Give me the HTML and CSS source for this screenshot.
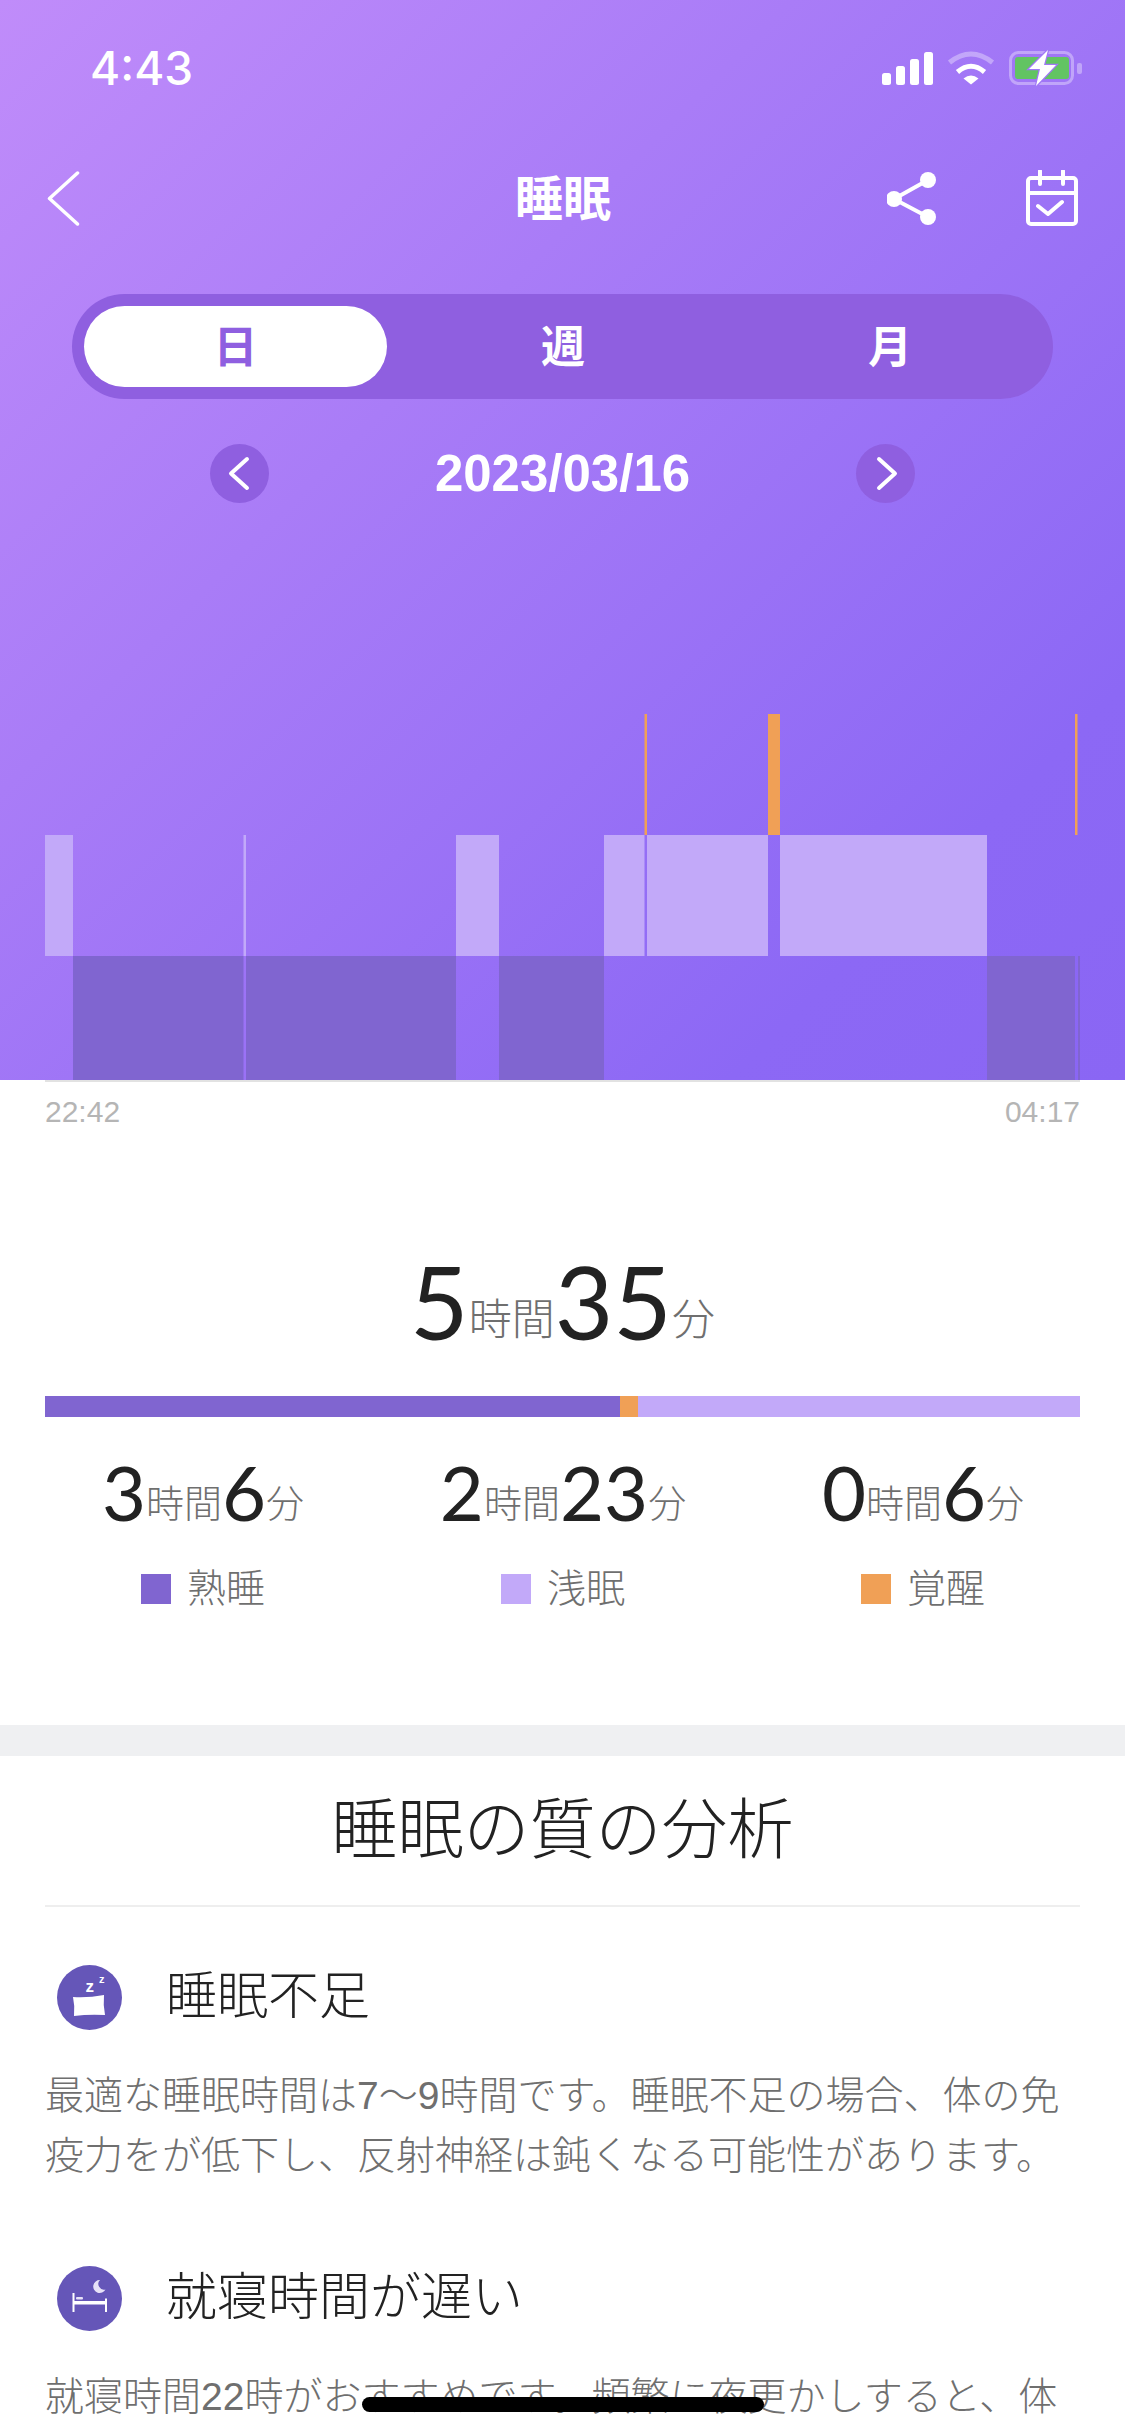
FILE: index.html
```html
<!DOCTYPE html>
<html lang="ja">
<head>
    <title>睡眠</title>
    <meta charset="utf-8">
    <link rel="stylesheet" href="styles.css">
</head>
<body>
    <div class="screen">
        <div class="hero">
            <div class="status">
                <span class="time">4:43</span>
                <div class="status-icons">
                    <svg class="signal" width="51" height="33" viewBox="0 0 51 33">
                        <rect x="0" y="21" width="9" height="12" rx="2.5"/>
                        <rect x="14" y="14" width="9" height="19" rx="2.5"/>
                        <rect x="28" y="7" width="9" height="26" rx="2.5"/>
                        <rect x="42" y="0" width="9" height="33" rx="2.5"/>
                    </svg>
                    <svg class="wifi" width="46" height="34" viewBox="0 0 46 34">
                        <path class="wifi-dim" d="M1.5 11.5Q23 -5.5 44.5 11.5"/>
                        <path class="wifi-on" d="M9.5 21Q23 9.5 36.5 21"/>
                        <path class="wifi-dot" d="M15.5 27.5Q23 21.5 30.5 27.5L23 33.5Z"/>
                    </svg>
                    <svg class="battery" width="73" height="34" viewBox="0 0 73 34">
                        <rect class="batt-shell" x="1.5" y="1.5" width="62" height="31" rx="8"/>
                        <rect class="batt-nub" x="68" y="12" width="5" height="11" rx="2"/>
                        <rect class="batt-fill" x="6" y="6" width="54" height="22" rx="3"/>
                        <path class="batt-bolt" d="M39 -1L20 18H31L27 35L47 14H35Z"/>
                    </svg>
                </div>
            </div>

            <div class="nav">
                <svg class="line-icon back" width="34" height="55" viewBox="0 0 34 55">
                    <path d="M30.5 2L2.5 27.5L30.5 53"/>
                </svg>
                <div class="nav-title">睡眠</div>
                <div class="nav-actions">
                    <svg class="line-icon" width="50" height="54" viewBox="0 0 50 54">
                        <path d="M41 9L7 28L41 46"/>
                        <circle class="solid" cx="41" cy="9" r="8"/>
                        <circle class="solid" cx="7" cy="28" r="8"/>
                        <circle class="solid" cx="41" cy="46" r="8"/>
                    </svg>
                    <svg class="line-icon" width="54" height="56" viewBox="0 0 54 56">
                        <rect x="3" y="8" width="48" height="46" rx="3"/>
                        <path d="M3 23H51M15 1V14M38 1V14M13 36L23 44L37 32"/>
                    </svg>
                </div>
            </div>

            <div class="tabs">
                <div class="tab active">日</div>
                <div class="tab">週</div>
                <div class="tab">月</div>
            </div>

            <div class="date-row">
                <div class="date-btn">
                    <svg class="line-icon" width="59" height="59" viewBox="0 0 59 59"><path d="M37 15L21 29.5L37 44"/></svg>
                </div>
                <div class="date-text">2023/03/16</div>
                <div class="date-btn">
                    <svg class="line-icon" width="59" height="59" viewBox="0 0 59 59"><path d="M23 15L39 29.5L23 44"/></svg>
                </div>
            </div>

            <svg class="chart" width="1125" height="366" viewBox="0 0 1125 366">
                <g class="awake">
                    <rect x="644.5" y="0" width="2.5" height="121"/>
                    <rect x="768" y="0" width="12" height="121"/>
                    <rect x="1075" y="0" width="2.5" height="121"/>
                </g>
                <g class="light">
                    <rect x="45" y="121" width="28" height="121"/>
                    <rect x="243.5" y="121" width="2.5" height="121"/>
                    <rect x="456" y="121" width="43" height="121"/>
                    <rect x="604" y="121" width="40.5" height="121"/>
                    <rect x="647" y="121" width="121" height="121"/>
                    <rect x="780" y="121" width="207" height="121"/>
                </g>
                <g class="deep">
                    <rect x="73" y="242" width="170.5" height="124"/>
                    <rect x="246" y="242" width="210" height="124"/>
                    <rect x="499" y="242" width="105" height="124"/>
                    <rect x="987" y="242" width="88" height="124"/>
                    <rect x="1078" y="242" width="2" height="124"/>
                </g>
            </svg>
        </div>

        <div class="axis">
            <span>22:42</span>
            <span>04:17</span>
        </div>

        <div class="total duration">
            <b>5</b><span>時間</span><b>35</b><span>分</span>
        </div>

        <div class="ratio">
            <div class="ratio-deep"></div>
            <div class="ratio-awake"></div>
            <div class="ratio-light"></div>
        </div>

        <div class="stats">
            <div class="stat">
                <div class="duration"><b>3</b><span>時間</span><b>6</b><span>分</span></div>
                <div class="legend"><i class="swatch-deep"></i>熟睡</div>
            </div>
            <div class="stat">
                <div class="duration"><b>2</b><span>時間</span><b>23</b><span>分</span></div>
                <div class="legend"><i class="swatch-light"></i>浅眠</div>
            </div>
            <div class="stat">
                <div class="duration"><b>0</b><span>時間</span><b>6</b><span>分</span></div>
                <div class="legend"><i class="swatch-awake"></i>覚醒</div>
            </div>
        </div>

        <div class="band"></div>

        <div class="analysis">
            <h2>睡眠の質の分析</h2>

            <div class="item">
                <div class="item-head">
                    <svg class="badge" width="65" height="65" viewBox="0 0 65 65">
                        <circle cx="32.5" cy="32.5" r="32.5"/>
                        <path class="badge-fill" d="M16 32Q31 33 47 30Q46 40 48 50Q32 49 17 51Q18 41 16 32Z"/>
                        <text class="zed" x="28.5" y="27">z</text>
                        <text class="zed-small" x="42" y="18">z</text>
                    </svg>
                    <h3>睡眠不足</h3>
                </div>
                <p>最適な睡眠時間は7〜9時間です。睡眠不足の場合、体の免疫力をが低下し、反射神経は鈍くなる可能性があります。</p>
            </div>

            <div class="item">
                <div class="item-head">
                    <svg class="badge" width="65" height="65" viewBox="0 0 65 65">
                        <circle cx="32.5" cy="32.5" r="32.5"/>
                        <path class="badge-fill" d="M15.5 27H17.5V35H48V32.5H50V46H48V38.5H17.5V46H15.5Z"/>
                        <rect class="badge-soft" x="19" y="31" width="7" height="2.5" rx="1"/>
                        <path class="badge-soft" d="M43 14A6.5 6.5 0 1 0 48.5 23.5A5.7 5.7 0 0 1 43 14Z"/>
                    </svg>
                    <h3>就寝時間が遅い</h3>
                </div>
                <p>就寝時間22時がおすすめです。頻繁に夜更かしすると、体</p>
            </div>
        </div>

        <div class="home-bar"></div>
    </div>
</body>
</html>
```

FILE: styles.css
```css
body {
    margin: 0;
    background: #fff;
    font-family: "Liberation Sans", "Noto Sans CJK JP", sans-serif;
}
.screen {
    position: relative;
    width: 1125px;
    height: 2436px;
    overflow: hidden;
}

/* purple header */
.hero {
    height: 1080px;
    display: flex;
    flex-direction: column;
    background: linear-gradient(135deg, #c08cfa 0%, #a97cf7 36%, #8c68f5 82%, #8a66f4 100%);
    color: #fff;
}
.status {
    height: 136px;
    display: flex;
    align-items: center;
    justify-content: space-between;
    padding: 0 43px 0 90px;
    box-sizing: border-box;
}
.time {
    font-size: 46px;
    font-weight: 500;
    font-family: "Inter", "Liberation Sans", sans-serif;
}
.status-icons {
    display: flex;
    align-items: center;
    gap: 15px;
}
.signal { fill: #fff; }
.wifi, .battery { overflow: visible; }
.wifi-dim { fill: none; stroke: rgba(255,255,255,0.35); stroke-width: 5; }
.wifi-on { fill: none; stroke: #fff; stroke-width: 5; }
.wifi-dot { fill: #fff; }
.batt-shell { fill: none; stroke: rgba(255,255,255,0.35); stroke-width: 3; }
.batt-nub { fill: rgba(255,255,255,0.35); }
.batt-fill { fill: #62c462; }
.batt-bolt { fill: #fff; stroke: #a078f6; stroke-width: 2.5; paint-order: stroke; }

.line-icon {
    display: block;
    fill: none;
    stroke: #fff;
    stroke-width: 4;
    stroke-linejoin: round;
    stroke-linecap: round;
}
.line-icon .solid { fill: #fff; stroke: none; }
.back { stroke-width: 3.5; }

.nav {
    height: 124px;
    display: grid;
    grid-template-columns: 1fr auto 1fr;
    align-items: center;
    padding: 0 46px 0 47px;
}
.nav-title {
    padding-bottom: 6px;
    font-size: 48px;
    font-weight: 700;
    text-align: center;
}
.nav-actions {
    display: flex;
    justify-content: flex-end;
    align-items: center;
    gap: 88px;
}

.tabs {
    display: grid;
    grid-template-columns: 303px 352px 302px;
    height: 105px;
    margin: 34px 72px 0;
    padding: 12px;
    box-sizing: border-box;
    border-radius: 53px;
    background: #8f5fe0;
}
.tab {
    display: flex;
    align-items: center;
    justify-content: center;
    padding-bottom: 6px;
    font-size: 44px;
    font-weight: 700;
    border-radius: 41px;
}
.tab.active {
    background: #fff;
    color: #8f5fe0;
}

.date-row {
    display: flex;
    align-items: center;
    justify-content: space-between;
    margin: 45px 210px 0;
}
.date-btn {
    width: 59px;
    height: 59px;
    border-radius: 50%;
    background: #8f5fe0;
}
.date-text {
    font-size: 51px;
    font-weight: 700;
}

.chart {
    display: block;
    margin-top: auto;
    flex: none;
}
.awake { fill: #f0a056; }
.light { fill: #c2a9f9; }
.deep { fill: #8065d0; }

.axis {
    display: flex;
    justify-content: space-between;
    margin: 0 45px;
    padding-top: 13px;
    border-top: 2px solid #e2e2e2;
    font-size: 30px;
    line-height: 33px;
    color: #b5b5b5;
}

/* durations */
.duration {
    text-align: center;
    font-size: 38px;
    line-height: 76px;
    color: #6f6f6f;
    font-weight: 300;
}
.duration span {
    vertical-align: 4px;
}
.duration b {
    font-family: "Lato", sans-serif;
    font-size: 76px;
    font-weight: 400;
    color: #222;
}
.total {
    margin-top: 123px;
    font-size: 43px;
    line-height: 101px;
}
.total b { font-size: 101px; }
.total span { vertical-align: 5px; }

.ratio {
    display: flex;
    height: 21px;
    margin: 20px 45px 0;
}
.ratio-deep { width: 575px; background: #8065d0; }
.ratio-awake { width: 18px; background: #f0a056; }
.ratio-light { flex: 1; background: #c2a9f9; }

.stats {
    display: grid;
    grid-template-columns: repeat(3, 360px);
    margin: 37px 22px 0 23px;
}
.legend {
    display: flex;
    justify-content: center;
    align-items: center;
    gap: 16px;
    margin-top: 17px;
    font-size: 39px;
    font-weight: 300;
    line-height: 52px;
    color: #6f6f6f;
}
.legend i {
    width: 30px;
    height: 30px;
}
.swatch-deep { background: #8065d0; }
.swatch-light { background: #c2a9f9; }
.swatch-awake { background: #f0a056; }

.band {
    height: 31px;
    margin-top: 110px;
    background: #eff0f2;
}

/* analysis list */
.analysis {
    padding: 0 45px;
}
.analysis h2 {
    margin: 0;
    height: 151px;
    line-height: 148px;
    box-sizing: border-box;
    border-bottom: 2px solid #eeeeee;
    text-align: center;
    font-size: 66px;
    font-weight: 300;
    color: #222;
}
.item {
    margin-top: 58px;
}
.item + .item {
    margin-top: 80px;
}
.item-head {
    display: flex;
    align-items: center;
    gap: 44px;
    padding-left: 12px;
}
.item-head h3 {
    margin: -2px 0 0;
    font-size: 51px;
    font-weight: 300;
    line-height: 60px;
    color: #222;
}
.item p {
    margin: 36px 0 0;
    font-size: 39px;
    font-weight: 300;
    line-height: 60px;
    color: #6f6f6f;
}
.badge { flex: none; fill: #6556b8; }
.badge-fill { fill: #fff; }
.badge-soft { fill: #e7e2f7; }
.zed, .zed-small {
    fill: #fff;
    font-family: "Liberation Sans", sans-serif;
    font-weight: 700;
}
.zed { font-size: 17px; }
.zed-small { font-size: 11px; }

.home-bar {
    position: absolute;
    left: 362px;
    top: 2397px;
    width: 402px;
    height: 15px;
    border-radius: 8px;
    background: #000;
}
```
